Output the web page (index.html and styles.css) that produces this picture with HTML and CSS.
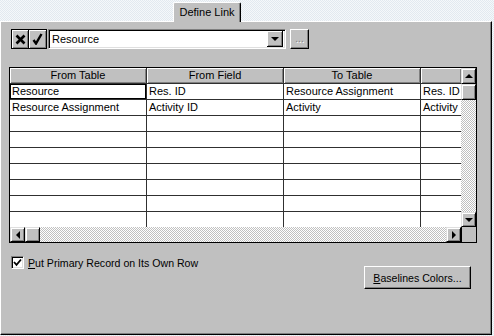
FILE: index.html
```html
<!DOCTYPE html>
<html lang="en">
<head>
  <meta charset="UTF-8">
  <title>Define Link</title>
  <link rel="stylesheet" href="styles.css">
</head>
<body>
  <div id="window">
    <div class="tabs">
      <div class="tab">Define Link</div>
    </div>
    <div class="panel">
      <div class="toolbar">
        <button class="tool-btn tool-cancel">
          <svg width="11" height="11" viewBox="0 0 11 11"><path d="M1.5 1.5 L9.5 9.5 M9.5 1.5 L1.5 9.5" stroke="#000" stroke-width="2.6"/></svg>
        </button>
        <button class="tool-btn tool-ok">
          <svg width="11" height="12" viewBox="0 0 11 12"><path d="M1.5 7 L4 10.5 L9.5 1" stroke="#000" stroke-width="2.4" fill="none"/></svg>
        </button>
        <div class="combo">
          <span class="combo-text">Resource</span>
          <span class="combo-arrow"><span class="tri-down"></span></span>
        </div>
        <button class="ellipsis-btn">...</button>
      </div>

      <div class="grid-frame">
        <div class="grid-main">
          <div class="cells">
            <div class="row head">
              <div class="cell c1">From Table</div>
              <div class="cell c2">From Field</div>
              <div class="cell c3">To Table</div>
              <div class="cell c4"></div>
            </div>
            <div class="row">
              <div class="cell c1 focus">Resource</div>
              <div class="cell c2">Res. ID</div>
              <div class="cell c3">Resource Assignment</div>
              <div class="cell c4">Res. ID</div>
            </div>
            <div class="row">
              <div class="cell c1">Resource Assignment</div>
              <div class="cell c2">Activity ID</div>
              <div class="cell c3">Activity</div>
              <div class="cell c4">Activity</div>
            </div>
            <div class="row"><div class="cell c1"></div><div class="cell c2"></div><div class="cell c3"></div><div class="cell c4"></div></div>
            <div class="row"><div class="cell c1"></div><div class="cell c2"></div><div class="cell c3"></div><div class="cell c4"></div></div>
            <div class="row"><div class="cell c1"></div><div class="cell c2"></div><div class="cell c3"></div><div class="cell c4"></div></div>
            <div class="row"><div class="cell c1"></div><div class="cell c2"></div><div class="cell c3"></div><div class="cell c4"></div></div>
            <div class="row"><div class="cell c1"></div><div class="cell c2"></div><div class="cell c3"></div><div class="cell c4"></div></div>
            <div class="row"><div class="cell c1"></div><div class="cell c2"></div><div class="cell c3"></div><div class="cell c4"></div></div>
            <div class="row"><div class="cell c1"></div><div class="cell c2"></div><div class="cell c3"></div><div class="cell c4"></div></div>
          </div>
          <div class="vscroll">
            <span class="sb-btn sb-v"><span class="tri-up"></span></span>
            <span class="sb-thumb sb-v"></span>
            <span class="sb-track"></span>
            <span class="sb-btn sb-v sb-last"><span class="tri-down"></span></span>
          </div>
        </div>
        <div class="hscroll">
          <span class="sb-btn"><span class="tri-left"></span></span>
          <span class="sb-thumb"></span>
          <span class="sb-track"></span>
          <span class="sb-btn"><span class="tri-right"></span></span>
          <span class="sb-corner"></span>
        </div>
      </div>

      <label class="check-row">
        <span class="checkbox">
          <svg width="9" height="9" viewBox="0 0 9 9"><path d="M1 4 L3.5 6.8 L8 1.5" stroke="#000" stroke-width="1.8" fill="none"/></svg>
        </span>
        <span><u>P</u>ut Primary Record on Its Own Row</span>
      </label>

      <div class="actions">
        <button class="push-btn"><u>B</u>aselines Colors...</button>
      </div>
    </div>
  </div>
</body>
</html>
```

FILE: styles.css
```css
html, body {
  margin: 0;
  font-family: "Liberation Sans", Arial, sans-serif;
  font-size: 11px;
  color: #000;
}

body {
  width: 494px;
  height: 336px;
  overflow: hidden;
  background: repeating-conic-gradient(#f5f8fa 0 25%, #e2e9f0 0 50%) 0 0 / 2px 2px;
}

button {
  font-family: "Liberation Sans", Arial, sans-serif;
  font-size: 11px;
  color: #000;
  padding: 0;
  margin: 0;
}

/* tab strip */
.tabs {
  display: flex;
  padding-left: 173px;
  padding-top: 2px;
}

.tab {
  position: relative;
  z-index: 1;
  width: 66px;
  height: 19px;
  margin-bottom: -1px;
  background-color: #c0c0c0;
  border-top: 1px solid #fff;
  border-left: 1px solid #fff;
  border-right: 1px solid #000;
  box-shadow: inset -1px 0 #808080;
  border-radius: 2px 2px 0 0;
  text-align: center;
  line-height: 18px;
}

/* main panel */
.panel {
  width: 482px;
  height: 305px;
  background-color: #c0c0c0;
  border-top: 1px solid #fff;
  border-left: 1px solid #fff;
  border-right: 1px solid #000;
  border-bottom: 1px solid #000;
  box-shadow: inset -1px -1px #808080;
  padding: 7px 0 0 8px;
}

.toolbar {
  display: flex;
  align-items: flex-start;
  margin-left: 2px;
  height: 20px;
}

.tool-btn {
  width: 18px;
  height: 20px;
  background-color: #c0c0c0;
  border: 1px solid #000;
  box-shadow: inset 1px 1px #fff, inset -1px -1px #808080;
  display: flex;
  align-items: center;
  justify-content: center;
}

.tool-ok {
  border-left: none;
}

.combo {
  display: flex;
  align-items: center;
  width: 238px;
  height: 20px;
  margin-left: 1px;
  box-sizing: border-box;
  background-color: #fff;
  border-top: 1px solid #808080;
  border-left: 1px solid #808080;
  border-right: 1px solid #fff;
  border-bottom: 1px solid #fff;
  box-shadow: inset 1px 1px #000, inset -1px -1px #dfdfdf;
  padding: 2px 2px 2px 3px;
}

.combo-text {
  flex: 1;
}

.combo-arrow {
  width: 16px;
  height: 16px;
  box-sizing: border-box;
  background-color: #c0c0c0;
  border-right: 1px solid #000;
  border-bottom: 1px solid #000;
  box-shadow: inset 1px 1px #fff, inset -1px -1px #808080;
  display: flex;
  align-items: center;
  justify-content: center;
}

.ellipsis-btn {
  width: 19px;
  height: 20px;
  margin-left: 4px;
  background-color: #c0c0c0;
  border-top: 1px solid #fff;
  border-left: 1px solid #fff;
  border-right: 1px solid #000;
  border-bottom: 1px solid #000;
  box-shadow: inset -1px -1px #808080;
  color: #808080;
  text-shadow: 1px 1px #fff;
  font-size: 10px;
  line-height: 14px;
}

/* arrow glyphs */
.tri-down, .tri-up, .tri-left, .tri-right {
  width: 0;
  height: 0;
  display: block;
}

.tri-down {
  border-left: 4px solid transparent;
  border-right: 4px solid transparent;
  border-top: 4px solid #000;
}

.tri-up {
  border-left: 4px solid transparent;
  border-right: 4px solid transparent;
  border-bottom: 4px solid #000;
}

.tri-left {
  border-top: 4px solid transparent;
  border-bottom: 4px solid transparent;
  border-right: 4px solid #000;
}

.tri-right {
  border-top: 4px solid transparent;
  border-bottom: 4px solid transparent;
  border-left: 4px solid #000;
}

/* grid */
.grid-frame {
  width: 466px;
  margin-top: 18px;
  border: 1px solid #000;
  background-color: #fff;
}

.grid-main {
  display: flex;
  height: 159px;
}

.cells {
  width: 451px;
  height: 159px;
  overflow: hidden;
}

.row {
  display: flex;
  height: 16px;
}

.cell {
  box-sizing: border-box;
  height: 16px;
  line-height: 15px;
  padding-left: 2px;
  border-right: 1px solid #303030;
  border-bottom: 1px solid #303030;
  white-space: nowrap;
  overflow: hidden;
}

.c1, .c2, .c3 {
  width: 137px;
}

.c4 {
  width: 40px;
  border-right: none;
}

.head .cell {
  background-color: #c0c0c0;
  box-shadow: inset 1px 1px #fff, inset -1px -1px #808080;
  text-align: center;
  padding-left: 0;
}

.focus {
  box-shadow: inset 0 0 0 1px #000;
}

/* scrollbars */
.vscroll {
  width: 15px;
  display: flex;
  flex-direction: column;
}

.hscroll {
  display: flex;
  height: 15px;
}

.sb-btn, .sb-thumb {
  width: 15px;
  height: 15px;
  box-sizing: border-box;
  background-color: #c0c0c0;
  border-top: 1px solid #dfdfdf;
  border-left: 1px solid #dfdfdf;
  border-right: 1px solid #000;
  border-bottom: 1px solid #000;
  box-shadow: inset 1px 1px #fff, inset -1px -1px #808080;
  display: flex;
  align-items: center;
  justify-content: center;
}

.sb-v {
  height: 16px;
}

.sb-last {
  height: 15px;
}

.sb-track {
  flex: 1;
  background: repeating-conic-gradient(#c0c0c0 0 25%, #fff 0 50%) 0 0 / 2px 2px;
}

.sb-corner {
  width: 15px;
  height: 15px;
  background-color: #c0c0c0;
  border-left: 1px solid #000;
  box-sizing: border-box;
}

/* options */
.check-row {
  display: flex;
  align-items: center;
  gap: 4px;
  height: 13px;
  margin-top: 13px;
  margin-left: 2px;
  font-size: 10.6px;
}

.checkbox {
  width: 13px;
  height: 13px;
  box-sizing: border-box;
  background-color: #fff;
  border-top: 1px solid #808080;
  border-left: 1px solid #808080;
  border-right: 1px solid #fff;
  border-bottom: 1px solid #fff;
  box-shadow: inset 1px 1px #000, inset -1px -1px #dfdfdf;
  display: flex;
  align-items: center;
  justify-content: center;
}

.actions {
  display: flex;
  justify-content: flex-end;
  padding-right: 20px;
  margin-top: -3px;
}

.push-btn {
  width: 107px;
  height: 23px;
  background-color: #c0c0c0;
  border-top: 1px solid #fff;
  border-left: 1px solid #fff;
  border-right: 1px solid #000;
  border-bottom: 1px solid #000;
  box-shadow: inset -1px -1px #808080;
  font-size: 10.6px;
}
```
